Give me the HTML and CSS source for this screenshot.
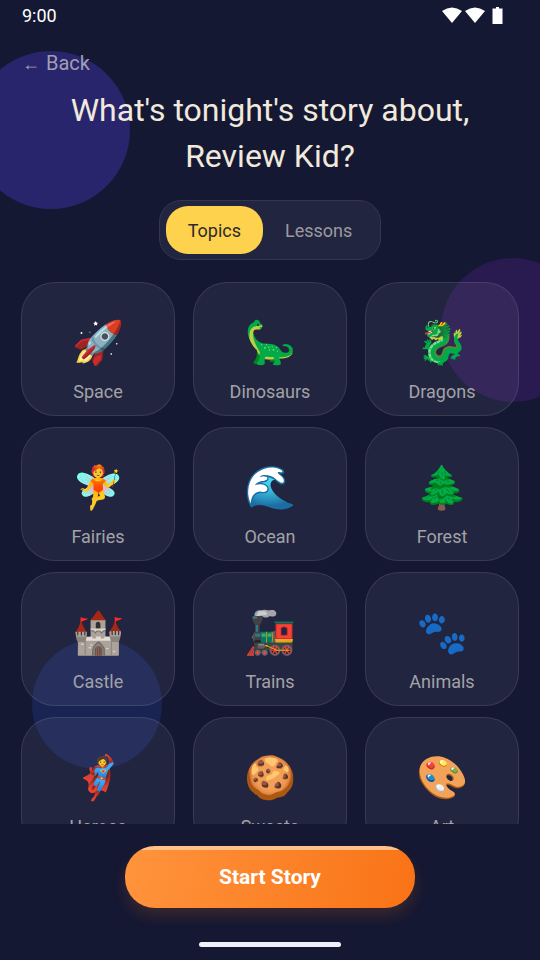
FILE: index.html
```html
<!DOCTYPE html>
<html lang="en">
<head>
    <meta charset="UTF-8">
    <meta name="viewport" content="width=device-width, initial-scale=1.0">
    <title>Pick a Story</title>
    <link rel="stylesheet" href="styles.css">
</head>
<body>
    <div class="backdrop">
        <div class="orb orb-indigo"></div>
        <div class="orb orb-purple"></div>
        <div class="orb orb-blue"></div>
    </div>

    <div class="status-bar">
        <span>9:00</span>
        <svg width="62" height="18" viewBox="0 0 62 18" fill="#fff">
            <path d="M0 4Q10 -3 20 4L10 16Z"/>
            <path d="M23 4Q33 -3 43 4L33 16Z"/>
            <path d="M51 1.5h3V0h3v1.500h3.500V17H50.500V1.500Z"/>
        </svg>
    </div>

    <header>
        <a class="back" href="#"><span class="arrow">←</span> Back</a>
        <h1>What's tonight's story about, Review Kid?</h1>
        <div class="tabs">
            <button class="tab active">Topics</button>
            <button class="tab">Lessons</button>
        </div>
    </header>

    <main class="topics">
        <button class="card"><span class="icon">🚀</span>Space</button>
        <button class="card"><span class="icon">🦕</span>Dinosaurs</button>
        <button class="card"><span class="icon">🐉</span>Dragons</button>
        <button class="card"><span class="icon">🧚</span>Fairies</button>
        <button class="card"><span class="icon">🌊</span>Ocean</button>
        <button class="card"><span class="icon">🌲</span>Forest</button>
        <button class="card"><span class="icon">🏰</span>Castle</button>
        <button class="card"><span class="icon">🚂</span>Trains</button>
        <button class="card"><span class="icon">🐾</span>Animals</button>
        <button class="card"><span class="icon">🦸</span>Heroes</button>
        <button class="card"><span class="icon">🍪</span>Sweets</button>
        <button class="card"><span class="icon">🎨</span>Art</button>
    </main>

    <footer>
        <button class="start">Start Story</button>
        <div class="home-bar"></div>
    </footer>
</body>
</html>
```
FILE: styles.css
```css
* {
    box-sizing: border-box;
}
body {
    position: relative;
    display: flex;
    flex-direction: column;
    height: 100vh;
    margin: 0;
    background: #151833;
    color: #f0e9dc;
    font-family: Roboto, sans-serif;
}
button {
    border: none;
    background: none;
    font-family: inherit;
    cursor: pointer;
}

/* Soft circles behind the content */
.backdrop {
    position: absolute;
    inset: 0;
    z-index: -1;
    overflow: hidden;
}
.orb {
    position: absolute;
    border-radius: 50%;
}
.orb-indigo {
    top: 51px;
    left: -28px;
    width: 158px;
    height: 158px;
    background: #28256c;
}
.orb-purple {
    top: 258px;
    right: -45px;
    width: 144px;
    height: 144px;
    background: #291a50;
}
.orb-blue {
    bottom: 191px;
    left: 32px;
    width: 130px;
    height: 130px;
    background: #1a2452;
}

.status-bar {
    display: flex;
    justify-content: space-between;
    align-items: center;
    height: 31px;
    padding: 0 36px 0 22px;
    color: #fff;
    font-size: 18px;
}

header {
    display: flex;
    flex-direction: column;
    padding: 20px 22px 22px;
}
.back {
    align-self: flex-start;
    color: #a09fb0;
    font-size: 20px;
    line-height: 24px;
    text-decoration: none;
}
.arrow {
    margin-right: 1px;
    font-family: "Noto Sans", sans-serif;
    font-size: 18px;
}
h1 {
    margin: 12px 0 21px;
    font-size: 32px;
    font-weight: 400;
    line-height: 46px;
    text-align: center;
}
.tabs {
    display: flex;
    align-self: center;
    padding: 5px 6px;
    border: 1px solid #34364f;
    border-radius: 22px;
    background: rgba(255, 255, 255, 0.06);
}
.tab {
    height: 48px;
    padding: 0 22px;
    border-radius: 22px;
    color: #9b9a9f;
    font-size: 18px;
}
.tab.active {
    background: #ffd24d;
    color: #2c2a30;
}

.topics {
    flex: 1;
    display: grid;
    grid-template-columns: repeat(3, 1fr);
    grid-auto-rows: 134px;
    gap: 11px 18px;
    min-height: 0;
    padding: 0 21px;
    overflow: hidden;
}
.card {
    display: flex;
    flex-direction: column;
    align-items: center;
    padding: 36px 0 0;
    border: 1px solid rgba(255, 255, 255, 0.1);
    border-radius: 34px;
    background: rgba(255, 255, 255, 0.06);
    color: #a3a2a8;
    font-size: 18px;
    line-height: 24px;
}
.icon {
    height: 48px;
    margin-bottom: 13px;
    font-size: 42px;
    line-height: 48px;
}

footer {
    display: flex;
    flex-direction: column;
    align-items: center;
    padding: 22px 22px 13px;
}
.start {
    width: 290px;
    height: 62px;
    border-radius: 30px;
    background: linear-gradient(#ffc08a, #ffc08a) top / 100% 4px no-repeat,
        linear-gradient(100deg, #ff943d, #f97316);
    box-shadow: 0 8px 14px rgba(249, 115, 22, 0.16);
    color: #fff;
    font-size: 21px;
    font-weight: 700;
}
.home-bar {
    width: 142px;
    height: 5px;
    margin-top: 34px;
    border-radius: 3px;
    background: #eef0fa;
}
```
